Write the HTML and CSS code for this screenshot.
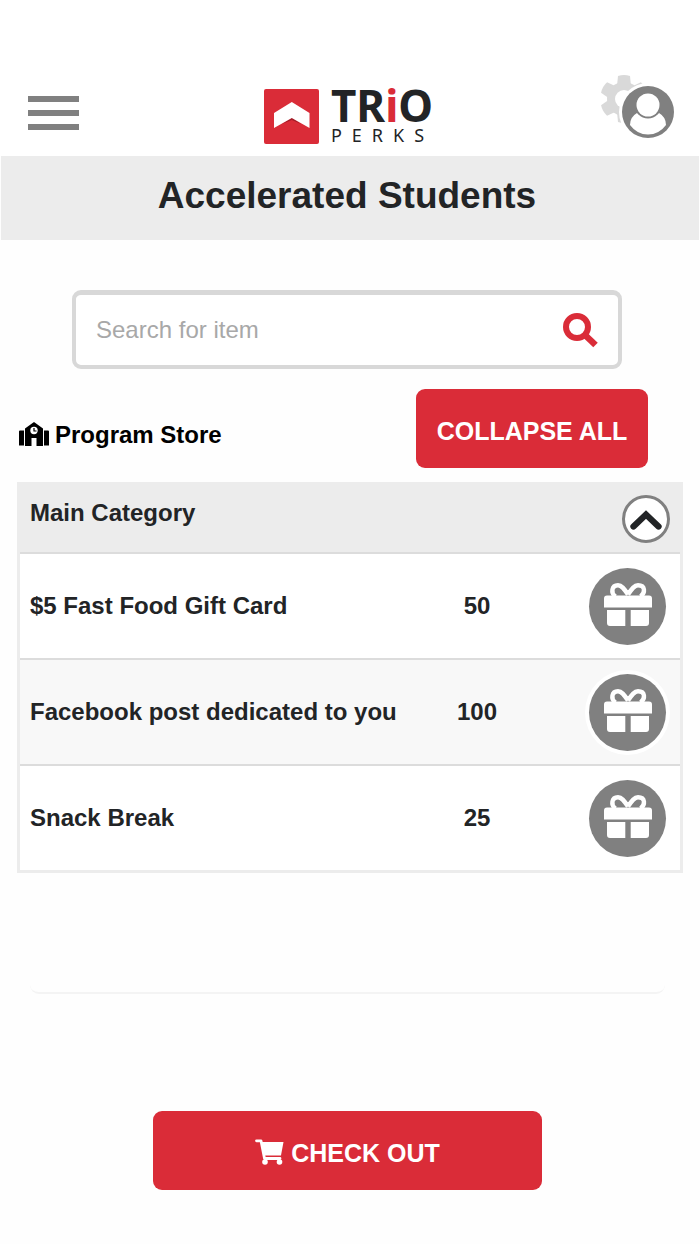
FILE: index.html
```
<!DOCTYPE html>
<html lang="en">
<head>
<meta charset="utf-8">
<meta name="viewport" content="width=device-width, initial-scale=1">
<title>TRiO Perks - Program Store</title>
<link rel="stylesheet" href="styles.css">
</head>
<body>
<svg class="defs" aria-hidden="true">
  <symbol id="gift" viewBox="0 0 48 43">
    <path d="M3 12.500h42q3 0 3 3V24.500H0v-9q0-3 3-3z" fill="#fff"/>
    <path d="M3 27h18.300v16H6q-3 0-3-3zM26.700 27H45v13q0 3-3 3H26.700z" fill="#fff"/>
    <path d="M24 11.500C20 5.500 17.500 2.200 14 2.200C7.500 2.200 6.500 10 11.500 13.500M24 11.500C28 5.500 30.500 2.200 34 2.200C41.500 2.200 41.500 10 36.500 13.500" fill="none" stroke="#fff" stroke-width="4.400"/>
  </symbol>
</svg>
<header class="topbar">
  <button class="menu" aria-label="Menu"><span></span><span></span><span></span></button>
  <a class="logo" href="#">
    <svg class="logo-mark" viewBox="0 0 55 55" aria-hidden="true">
      <rect width="55" height="55" rx="2" fill="#da2c38"/>
      <path d="M18 35L27.800 28.500 37 35 27.800 31z" fill="#a31d28"/>
      <path d="M10 24L27.800 13 45.500 24V39L27.800 29 10 39z" fill="#fff"/>
    </svg>
    <span class="logo-text">
      <span class="logo-name">TR<span class="logo-i">i</span>O</span>
      <span class="logo-sub">PERKS</span>
    </span>
  </a>
  <button class="account" aria-label="Account settings">
    <svg viewBox="0 0 76 66" aria-hidden="true">
      <g fill="#d9d9d9">
        <circle cx="25" cy="25" r="17"/>
        <path id="tooth" d="M18 12L19 2Q25 0 31 2L32 12V38L31 48Q25 50 19 48L18 38z"/>
        <use href="#tooth" transform="rotate(60 25 25)"/>
        <use href="#tooth" transform="rotate(120 25 25)"/>
      </g>
      <circle cx="25" cy="25" r="9" fill="#fff"/>
      <circle cx="49" cy="38" r="29" fill="#fff"/>
      <circle cx="49" cy="38" r="26" fill="#808080"/>
      <path d="M38 39Q31 43 31 51Q38 60.500 49 60.500Q60 60.500 67 51Q67 43 60 39Q49 48 38 39z" fill="#fff"/>
      <circle cx="49" cy="31" r="13.500" fill="#808080"/>
      <circle cx="49" cy="31" r="11.500" fill="#fff"/>
    </svg>
  </button>
</header>
<h1 class="title">Accelerated Students</h1>
<main>
  <form class="search" role="search">
    <input type="text" placeholder="Search for item" aria-label="Search for item">
    <button aria-label="Search">
      <svg viewBox="0 0 35 35" aria-hidden="true">
        <path d="M22 22L32.500 32" fill="none" stroke="#da2c38" stroke-width="6.500"/>
        <circle cx="14" cy="14" r="11" fill="none" stroke="#da2c38" stroke-width="6"/>
      </svg>
    </button>
  </form>
  <div class="store-bar">
    <h2 class="store-name">
      <svg viewBox="0 0 30 24" aria-hidden="true">
        <path d="M0 9.500Q0 8.500 1 8.500H5V23.500H0zM25 8.500H29Q30 8.500 30 9.500V23.500H25zM6 6.500L15 0 24 6.500V24H17.500V16H12.500V24H6z"/>
        <circle cx="15" cy="8.500" r="3.700" fill="#fff"/>
        <path d="M15 6v3h2.500" fill="none" stroke="#000" stroke-width="1.200"/>
      </svg>
      Program Store
    </h2>
    <button class="btn collapse">COLLAPSE ALL</button>
  </div>
  <table class="items">
    <colgroup><col><col class="col-cost"><col class="col-action"></colgroup>
    <thead>
      <tr>
        <th colspan="2" scope="colgroup">Main Category</th>
        <td class="toggle-cell">
          <button class="toggle" aria-label="Collapse Main Category">
            <svg viewBox="0 0 32 20" aria-hidden="true"><path d="M3.500 16.500L16 4.500L28.500 16.500" fill="none" stroke="#222426" stroke-width="6.300" stroke-linecap="round"/></svg>
          </button>
        </td>
      </tr>
    </thead>
    <tbody>
      <tr><th scope="row">$5 Fast Food Gift Card</th><td class="cost">50</td><td class="action"><button class="gift" aria-label="Add $5 Fast Food Gift Card"><svg aria-hidden="true"><use href="#gift"/></svg></button></td></tr>
      <tr><th scope="row">Facebook post dedicated to you</th><td class="cost">100</td><td class="action"><button class="gift" aria-label="Add Facebook post dedicated to you"><svg aria-hidden="true"><use href="#gift"/></svg></button></td></tr>
      <tr><th scope="row">Snack Break</th><td class="cost">25</td><td class="action"><button class="gift" aria-label="Add Snack Break"><svg aria-hidden="true"><use href="#gift"/></svg></button></td></tr>
    </tbody>
  </table>
  <div class="panel-end"></div>
  <button class="btn checkout">
    <svg viewBox="0 0 29 26" aria-hidden="true">
      <path d="M1.500 1.800H6L9.500 19.500H25" fill="none" stroke="#fff" stroke-width="2.800" stroke-linecap="round" stroke-linejoin="round"/>
      <path d="M6.500 3H28.500L26 16.500H9z" fill="#fff"/>
      <circle cx="10" cy="23" r="2.800" fill="#fff"/><circle cx="24.500" cy="23" r="2.800" fill="#fff"/>
    </svg>
    CHECK OUT
  </button>
</main>
</body>
</html>
```

FILE: styles.css
```
* {
  box-sizing: border-box;
}

body {
  margin: 0;
  background: #fefefe;
  color: #222426;
  font-family: "Liberation Sans", Arial, sans-serif;
  font-size: 24px;
  line-height: 28px;
}

button {
  padding: 0;
  border: 0;
  background: none;
  color: inherit;
  font: inherit;
  cursor: pointer;
}

svg {
  display: block;
}

.defs {
  display: none;
}

.topbar {
  display: flex;
  align-items: flex-end;
  justify-content: space-between;
  padding: 74px 25px 12px 28px;
  background: #fff;
}

.menu {
  display: flex;
  flex-direction: column;
  gap: 8px;
  margin-bottom: 14px;
}

.menu span {
  width: 51px;
  height: 6px;
  background: #808080;
}

.logo {
  display: flex;
  align-items: flex-end;
  gap: 12px;
  margin-left: 20px;
  color: #222426;
  font-family: "Noto Sans", sans-serif;
  text-decoration: none;
}

.logo-mark {
  width: 55px;
  height: 55px;
}

.logo-text {
  display: flex;
  flex-direction: column;
}

.logo-name {
  font-size: 44px;
  font-weight: 700;
  line-height: 44px;
}

.logo-i {
  color: #da2c38;
}

.logo-sub {
  font-size: 18px;
  line-height: 17px;
  letter-spacing: 10px;
}

.account {
  margin-bottom: 4px;
}

.account svg {
  width: 76px;
  height: 66px;
}

.title {
  margin: 0 1px;
  padding: 18px 6px 22px 0;
  background: #ececec;
  font-size: 37px;
  line-height: 44px;
  text-align: center;
}

.search {
  display: flex;
  align-items: center;
  height: 79px;
  margin: 50px 78px 0 72px;
  padding: 0 20px;
  border: 4px solid #d8d8d8;
  border-top-width: 5px;
  border-radius: 9px;
  background: #fff;
}

.search input {
  flex: 1;
  min-width: 0;
  padding: 0;
  border: 0;
  outline: 0;
  background: none;
  font: inherit;
}

.search input::placeholder {
  color: #a8a8a8;
  opacity: 1;
}

.search svg {
  width: 35px;
  height: 35px;
}

.store-bar {
  display: flex;
  align-items: center;
  justify-content: space-between;
  margin: 20px 52px 0 19px;
}

.store-name {
  display: flex;
  align-items: center;
  gap: 6px;
  margin: 12px 0 0;
  color: #000;
  font-size: 24px;
}

.store-name svg {
  width: 30px;
  height: 24px;
  margin-bottom: 2px;
}

.btn {
  display: flex;
  align-items: center;
  justify-content: center;
  gap: 7px;
  height: 79px;
  padding-top: 4px;
  border-radius: 9px;
  background: #da2c38;
  color: #fff;
  font-size: 25px;
  font-weight: 700;
}

.collapse {
  width: 232px;
}

.items {
  width: calc(100% - 34px);
  margin: 14px 17px 0;
  border: 3px solid #ececec;
  border-spacing: 0;
  background: #fff;
  font-weight: 700;
  table-layout: fixed;
}

.col-cost {
  width: 140px;
}

.col-action {
  width: 133px;
}

.items th,
.items td {
  padding: 0;
}

.items th {
  padding-left: 10px;
  text-align: left;
}

.items thead tr {
  height: 67px;
  background: #ececec;
}

.items thead th {
  padding-bottom: 12px;
}

.items tbody th,
.items tbody td {
  height: 106px;
  border-top: 2px solid #dcdcdc;
}

.items tbody tr:nth-child(even) {
  background: #f8f8f8;
}

.items .cost {
  text-align: center;
}

.items .toggle-cell {
  padding-right: 10px;
}

.toggle {
  display: flex;
  align-items: center;
  justify-content: center;
  width: 48px;
  height: 48px;
  margin-left: auto;
  padding-top: 2px;
  border: 3px solid #808080;
  border-radius: 50%;
  background: #fff;
}

.toggle svg {
  width: 32px;
  height: 20px;
}

.items .action {
  padding-right: 14px;
}

.gift {
  display: flex;
  align-items: center;
  justify-content: center;
  width: 77px;
  height: 77px;
  margin-left: auto;
  border-radius: 50%;
  background: #808080;
  box-shadow: 0 0 0 4px #fff;
}

.gift svg {
  width: 48px;
  height: 43px;
  margin-bottom: 4px;
}

.panel-end {
  height: 121px;
  margin: 0 35px 0 30px;
  border-bottom: 2px solid #f4f4f4;
  border-radius: 0 0 9px 9px;
}

.checkout {
  width: calc(100% - 311px);
  margin: 117px 158px 54px 153px;
}

.checkout svg {
  width: 29px;
  height: 26px;
  margin-bottom: 2px;
}
```
